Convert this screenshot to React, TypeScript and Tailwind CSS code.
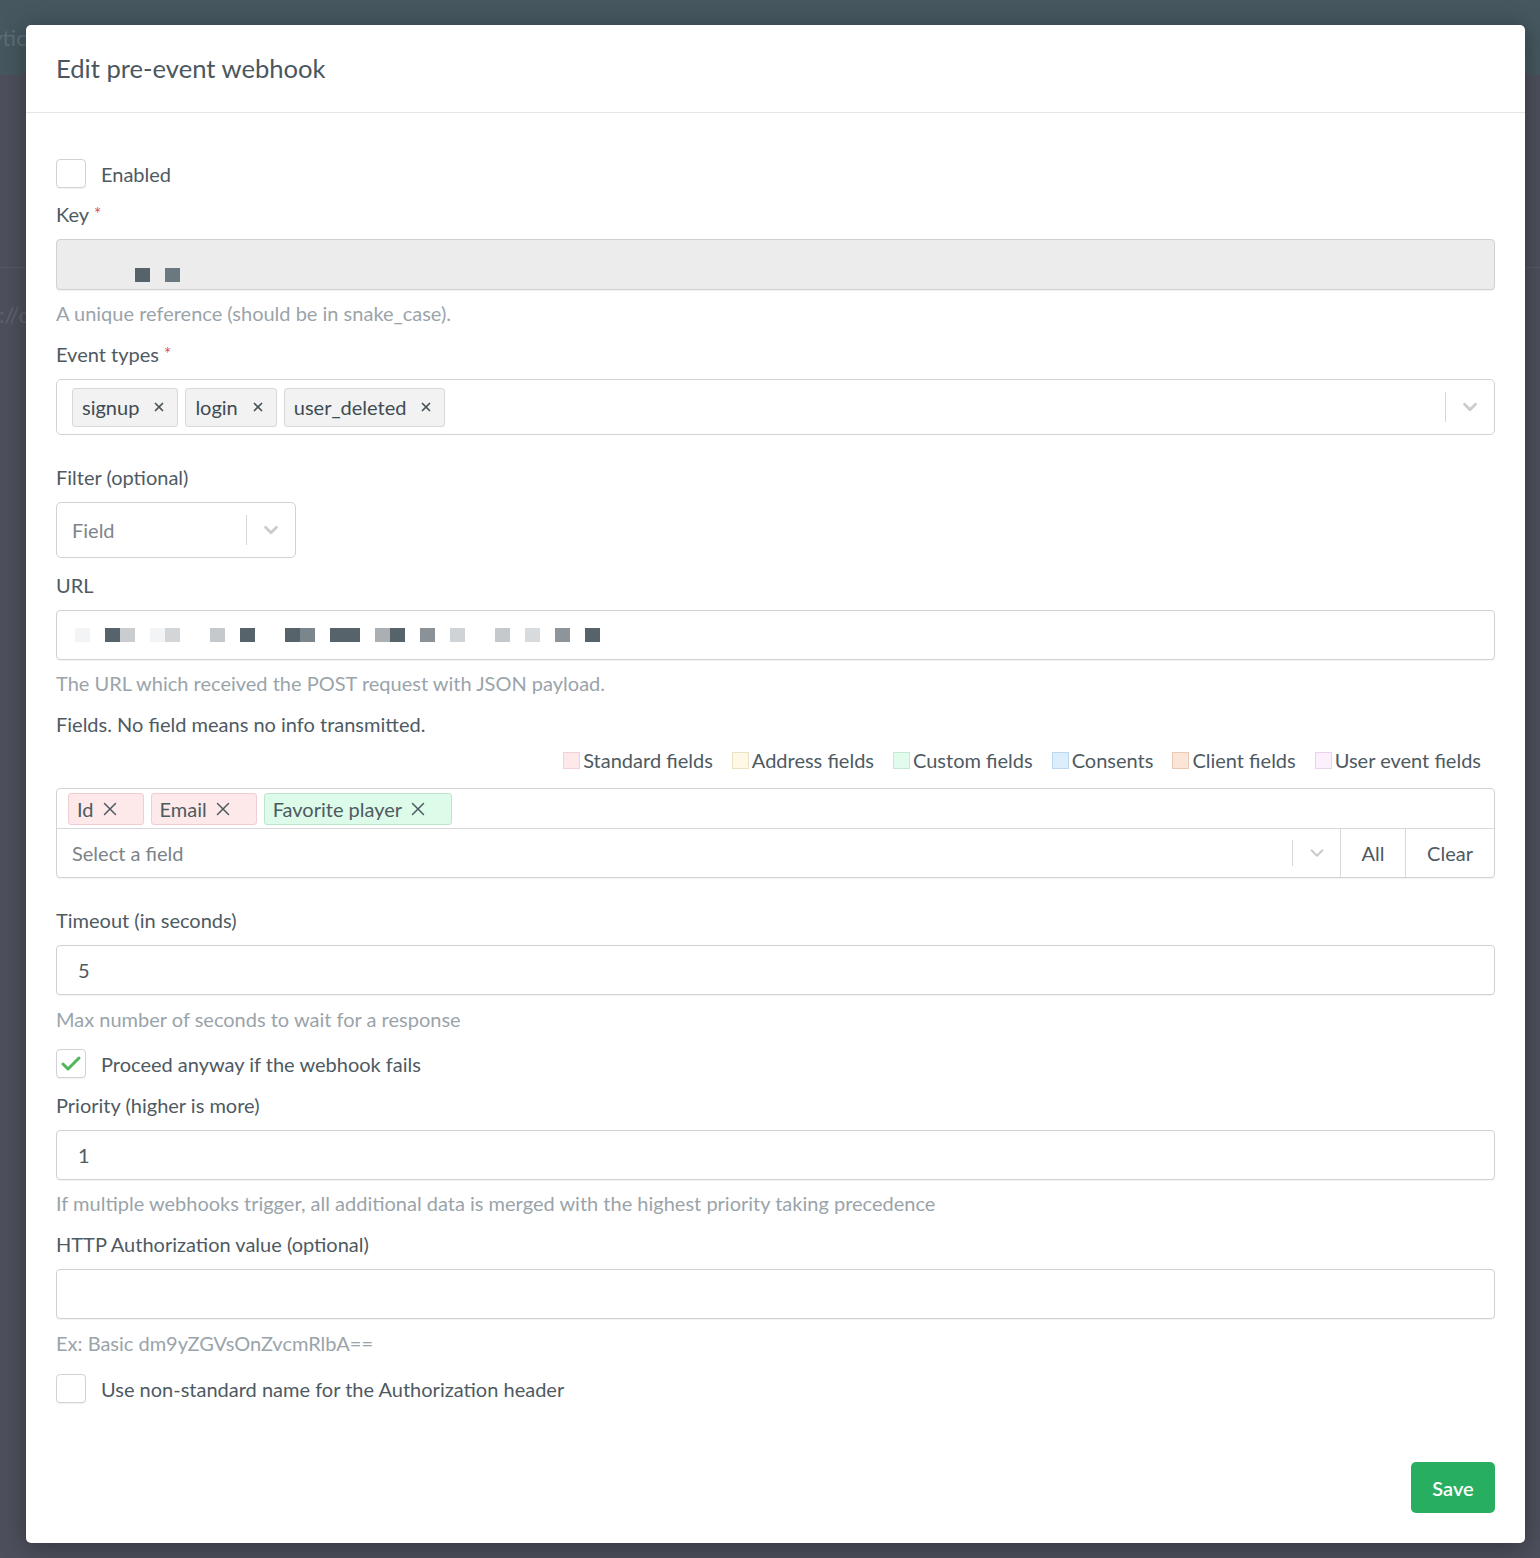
import React from 'react';
import { X, Check, ChevronDown } from 'lucide-react';

const font = { fontFamily: 'Lato, "Liberation Sans", sans-serif' };

// pixelated redaction cells, 15px each
const urlCells = [
  'bg-[#f3f4f5]', 'bg-transparent', 'bg-[#56636b]', 'bg-[#c9cdd0]', 'bg-transparent', 'bg-[#f3f4f6]', 'bg-[#d3d6d8]',
  'bg-transparent', 'bg-transparent', 'bg-[#c5c9cc]', 'bg-transparent', 'bg-[#56636b]', 'bg-transparent', 'bg-transparent',
  'bg-[#56636b]', 'bg-[#7a858c]', 'bg-transparent', 'bg-[#56636b]', 'bg-[#56636b]', 'bg-transparent', 'bg-[#a9afb3]',
  'bg-[#56636b]', 'bg-transparent', 'bg-[#8a9197]', 'bg-transparent', 'bg-[#d0d3d5]', 'bg-transparent', 'bg-transparent',
  'bg-[#c5c9cc]', 'bg-transparent', 'bg-[#d8dbdd]', 'bg-transparent', 'bg-[#8e959a]', 'bg-transparent', 'bg-[#56636b]',
];
const keyCells = ['bg-transparent', 'bg-transparent', 'bg-transparent', 'bg-transparent', 'bg-[#56636b]', 'bg-transparent', 'bg-[#6b7880]'];

const legend = [
  { label: 'Standard fields', cls: 'bg-[#fde9ea] border-[#f1d2d4]' },
  { label: 'Address fields', cls: 'bg-[#fdf9e6] border-[#ece2c2]' },
  { label: 'Custom fields', cls: 'bg-[#e1fbec] border-[#c4e8d1]' },
  { label: 'Consents', cls: 'bg-[#dcedfc] border-[#bcd7ee]' },
  { label: 'Client fields', cls: 'bg-[#fbe5d6] border-[#ebcab4]' },
  { label: 'User event fields', cls: 'bg-[#fcf0fd] border-[#ead2ee]' },
];

const Label = ({ children, required, className = '' }: { children: React.ReactNode; required?: boolean; className?: string }) => (
  <div className={`text-[20px] leading-[28px] text-[#4e5a62] ${className}`}>
    {children}
    {required && <span className="ml-[5px] text-[17px] align-top text-[#d9534f]">*</span>}
  </div>
);

const Help = ({ children, className = '' }: { children: React.ReactNode; className?: string }) => (
  <div className={`text-[20px] leading-[28px] text-[#9aa4aa] ${className}`}>{children}</div>
);

const Checkbox = ({ checked, label, className = '' }: { checked?: boolean; label: string; className?: string }) => (
  <div className={`flex items-center h-[29px] ${className}`}>
    <div className="w-[30px] h-[29px] rounded-[4px] border border-[#cfd3d6] bg-white shadow-[0_1px_1px_rgba(0,0,0,0.06)] flex items-center justify-center">
      {checked && <Check className="w-[24px] h-[24px] text-[#4fb65a]" strokeWidth={3} />}
    </div>
    <span className="ml-[15px] text-[20px] leading-[28px] text-[#4e5a62]">{label}</span>
  </div>
);

const TextInput = ({ children, className = '' }: { children?: React.ReactNode; className?: string }) => (
  <div className={`h-[50px] rounded-[4px] border border-[#cfd2d4] bg-white shadow-[0_1px_1px_rgba(0,0,0,0.05)] flex items-center px-[21px] text-[20px] text-[#4e5a62] ${className}`}>
    {children}
  </div>
);

function Cells({ cells }: { cells: string[] }) {
  return (
    <div className="flex">
      {cells.map((c, i) => (
        <span key={i} className={`w-[15px] h-[14px] ${c}`} />
      ))}
    </div>
  );
}

const EventTag = ({ label }: { label: string }) => (
  <div className="h-[39px] flex items-center rounded-[3px] border border-[#d9d9d9] bg-[#f2f2f2] pl-[9px] pr-[11px] text-[20px] text-[#3f4b53]">
    <span>{label}</span>
    <X className="ml-[13px] w-[14px] h-[14px] text-[#4a545b]" strokeWidth={3} />
  </div>
);

const FieldTag = ({ label, cls }: { label: string; cls: string }) => (
  <div className={`h-[32px] flex items-center rounded-[3px] border pl-[8px] pr-[22px] text-[20px] text-[#4e5a62] ${cls}`}>
    <span>{label}</span>
    <X className="ml-[5px] w-[22px] h-[22px] text-[#4e5a62]" strokeWidth={1.6} />
  </div>
);

export default function App() {
  return (
    <div className="relative w-[1540px] h-[1558px] overflow-hidden bg-[#4d505c]" style={font}>
      {/* page behind overlay */}
      <div className="h-[75px] bg-[#46575f] flex items-center">
        <span className="ml-[-52px] text-[22px] text-[#5d6e76]">Analytics</span>
      </div>
      <div className="h-[192px]" />
      <div className="border-t border-[#575b66] pt-[30px]">
        <span className="ml-[-1px] text-[22px] text-[#5f636d]">://c</span>
      </div>

      {/* modal */}
      <div className="absolute left-[26px] top-[25px] w-[1499px] h-[1518px] bg-white rounded-[5px] shadow-[0_4px_24px_rgba(0,0,0,0.35)] flex flex-col">
        <div className="h-[88px] border-b border-[#e5e5e5] px-[30px] flex items-center">
          <h2 className="text-[25.6px] text-[#4a5761]">Edit pre-event webhook</h2>
        </div>

        <div className="flex-1 px-[30px] pt-[46px] flex flex-col">
          <Checkbox label="Enabled" />

          <Label required className="mt-[12px]">Key</Label>
          <div className="mt-[11px] h-[51px] rounded-[4px] border border-[#cfd2d4] bg-[#ececec] shadow-[0_1px_1px_rgba(0,0,0,0.06)] flex items-end pb-[7px] pl-[18px]">
            <Cells cells={keyCells} />
          </div>
          <Help className="mt-[9px]">A unique reference (should be in snake_case).</Help>

          <Label required className="mt-[13px]">Event types</Label>
          <div className="mt-[11px] h-[56px] rounded-[5px] border border-[#d0d3d5] bg-white flex items-center pl-[15px]">
            <div className="flex-1 flex gap-[7px]">
              <EventTag label="signup" />
              <EventTag label="login" />
              <EventTag label="user_deleted" />
            </div>
            <div className="w-px h-[30px] bg-[#d6d6d6]" />
            <div className="w-[48px] flex justify-center">
              <ChevronDown className="w-[22px] h-[22px] text-[#cccccc]" strokeWidth={3} />
            </div>
          </div>

          <Label className="mt-[28px]">Filter (optional)</Label>
          <div className="mt-[11px] w-[240px] h-[56px] rounded-[5px] border border-[#d0d3d5] bg-white flex items-center pl-[15px]">
            <span className="flex-1 text-[20px] text-[#7e868b]">Field</span>
            <div className="w-px h-[30px] bg-[#d6d6d6]" />
            <div className="w-[48px] flex justify-center">
              <ChevronDown className="w-[22px] h-[22px] text-[#cccccc]" strokeWidth={3} />
            </div>
          </div>

          <Label className="mt-[13px]">URL</Label>
          <TextInput className="mt-[11px] !pl-[18px]">
            <Cells cells={urlCells} />
          </TextInput>
          <Help className="mt-[9px]">The URL which received the POST request with JSON payload.</Help>

          <Label className="mt-[13px]">Fields. No field means no info transmitted.</Label>
          <div className="mt-[8px] flex justify-end pr-[14px] gap-[19px]">
            {legend.map((l) => (
              <div key={l.label} className="flex items-center">
                <span className={`w-[17px] h-[17px] border ${l.cls}`} />
                <span className="ml-[3px] text-[20px] leading-[28px] text-[#4e5a62]">{l.label}</span>
              </div>
            ))}
          </div>

          <div className="mt-[14px] rounded-[4px] border border-[#d0d3d5] bg-white shadow-[0_1px_1px_rgba(0,0,0,0.05)]">
            <div className="h-[40px] border-b border-[#d6d8da] flex items-center gap-[7px] pl-[11px]">
              <FieldTag label="Id" cls="bg-[#fde9ea] border-[#efcdd0]" />
              <FieldTag label="Email" cls="bg-[#fde9ea] border-[#efcdd0]" />
              <FieldTag label="Favorite player" cls="bg-[#ddfbe9] border-[#bfe4cc]" />
            </div>
            <div className="h-[48px] flex items-center">
              <span className="flex-1 pl-[15px] text-[20px] text-[#7b8389]">Select a field</span>
              <div className="w-px h-[26px] bg-[#d6d6d6]" />
              <div className="w-[47px] flex justify-center">
                <ChevronDown className="w-[22px] h-[22px] text-[#c8c8c8]" strokeWidth={2} />
              </div>
              <div className="h-full w-[65px] border-l border-[#d6d8da] flex items-center justify-center text-[20px] text-[#4e5a62]">All</div>
              <div className="h-full w-[89px] border-l border-[#d6d8da] flex items-center justify-center text-[20px] text-[#4e5a62]">Clear</div>
            </div>
          </div>

          <Label className="mt-[28px]">Timeout (in seconds)</Label>
          <TextInput className="mt-[11px]">5</TextInput>
          <Help className="mt-[10px]">Max number of seconds to wait for a response</Help>

          <Checkbox checked label="Proceed anyway if the webhook fails" className="mt-[16px]" />

          <Label className="mt-[13px]">Priority (higher is more)</Label>
          <TextInput className="mt-[11px]">1</TextInput>
          <Help className="mt-[9px]">If multiple webhooks trigger, all additional data is merged with the highest priority taking precedence</Help>

          <Label className="mt-[13px]">HTTP Authorization value (optional)</Label>
          <TextInput className="mt-[11px]" />
          <Help className="mt-[10px]">Ex: Basic dm9yZGVsOnZvcmRlbA==</Help>

          <Checkbox label="Use non-standard name for the Authorization header" className="mt-[17px]" />

          <div className="flex-1" />
          <div className="flex justify-end pb-[30px]">
            <button className="w-[84px] h-[51px] rounded-[5px] bg-[#27ae60] text-white text-[20px] font-semibold">Save</button>
          </div>
        </div>
      </div>
    </div>
  );
}
